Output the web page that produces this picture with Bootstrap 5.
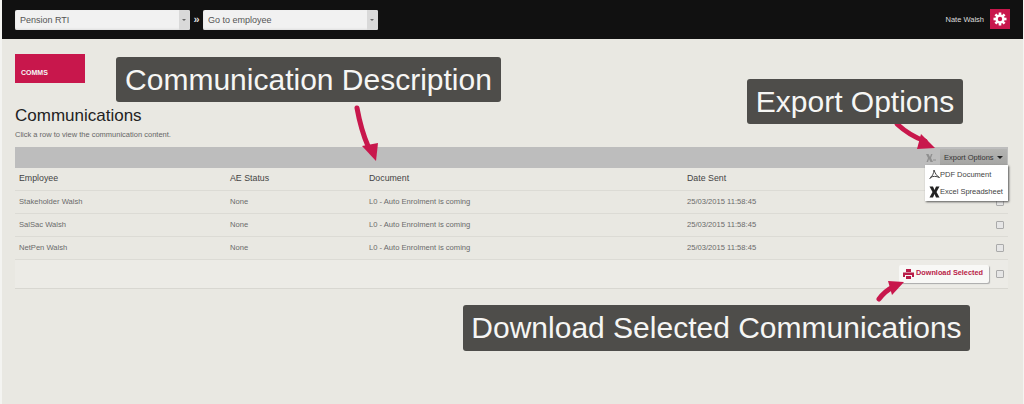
<!DOCTYPE html>
<html lang="en">
<head>
<meta charset="utf-8">
<title>Communications</title>
<link href="https://cdn.jsdelivr.net/npm/bootstrap@5.3.0/dist/css/bootstrap.min.css" rel="stylesheet">
<style>
html,body{height:404px;overflow:hidden}
body{background:#e9e8e2;font-family:"Liberation Sans",Arial,sans-serif;position:relative;color:#444;border-left:2px solid #f4f4f1;border-right:1px solid #f4f4f1}
.topbar{height:39px;background:#111;margin-left:-2px;margin-right:-1px;padding:10px 14px 0 15px}
.fake-select{height:20px;background:#f1f1f1;border-radius:2px;font-size:9px;color:#555;line-height:20px;padding-left:5px;position:relative;box-shadow:inset 0 -1px 2px #ddd}
.fake-select::after{content:"";position:absolute;right:0;top:0;bottom:0;width:11px;background:#d9d9d9;border-radius:0 2px 2px 0}
.fake-select::before{content:"";position:absolute;right:4px;top:9px;border:2px solid transparent;border-top:2px solid #666;z-index:1}
.sel-a{width:175px}.sel-b{width:175px}
.sep{color:#ddd;font-size:11px;font-weight:700;width:13px;text-align:center;line-height:18px}
.username{color:#ddd;font-size:7.5px}
.gear-box{width:20px;height:20px;background:#c8174c;margin-left:6px;margin-top:-1px}
.main-area{padding:15px 15px 0 13px}
.comms{width:70px;background:#c8174c;color:#f5f5f5;font-size:7px;font-weight:700;padding-left:6px;line-height:38px;height:29px;overflow:hidden}
.title{font-size:17px;color:#222;line-height:22px;margin:22px 0 0;font-weight:400}
.hint{font-size:7.5px;color:#666;line-height:10px;margin:3px 0 0}
.toolbar{height:21px;background:#bdbdbd;margin-top:7px;padding:2px 1px 0 0}
.xicon{margin:4px 4px 0 0}
.export-btn{height:17px;width:67px;background:linear-gradient(#b4b4b2,#a4a4a2);color:#333;font-size:7.5px;line-height:17px;padding-left:4px;position:relative;white-space:nowrap}
.export-btn::after{content:"";position:absolute;right:4px;top:7px;border:3px solid transparent;border-top:3px solid #222}
.grid-table{width:993px;table-layout:fixed;margin:0;font-size:7.6px;--bs-table-bg:transparent;--bs-table-color:#6a6a6a;border-color:#d9d8d2}
.grid-table th,.grid-table td{padding:0 4px;vertical-align:middle;border-bottom:1px solid #dcdbd5}
.grid-table th{font-weight:400;font-size:8.8px;color:#444;height:22px}
.grid-table td{height:23px}
.grid-table tr.foot td{height:29px;background:#ecebe6;border-bottom:1px solid #d8d7d1}
.grid-table .box-cell{padding:0 4px 0 0;text-align:right}
.box{display:inline-block;width:8px;height:8px;border:1px solid #aaa;background:#e6e6e6;border-radius:1px;vertical-align:middle}
.dl-btn{display:inline-flex;align-items:center;gap:2px;height:18px;width:90px;padding:0 0 0 4px;background:#f8f8f6;border:0;box-shadow:1px 1px 1px #aaa;border-radius:2px;color:#b81c48;font-size:7.3px;font-weight:700;white-space:nowrap;vertical-align:middle;margin-right:-1px}
.dl-btn svg{flex:none}
.foot-cell{text-align:right}
.export-menu{position:absolute;left:923px;top:165px;width:83px;height:36px;background:#fff;box-shadow:1px 1px 2px #555;font-size:7.5px;color:#444;padding-top:1px}
.export-menu div{height:17px;display:flex;align-items:center;gap:0;padding-left:4px;white-space:nowrap}
.export-menu svg{flex:none}
.callout{position:absolute;background:#4e4d4a;color:#f6f6f4;border-radius:3px;white-space:nowrap;text-align:center;font-weight:400;font-size:30px}
.c1{left:114px;top:57px;width:385px;height:45px;line-height:45px}
.c2{left:745px;top:79px;width:216px;height:45px;line-height:45px}
.c3{left:461px;top:305px;width:507px;height:46px;line-height:46px}
.arrows{position:absolute;left:-2px;top:0;width:1024px;height:404px;pointer-events:none}
</style>
</head>
<body>
<div class="topbar d-flex align-items-start">
  <div class="fake-select sel-a">Pension RTI</div>
  <div class="sep">»</div>
  <div class="fake-select sel-b">Go to employee</div>
  <div class="ms-auto d-flex align-items-center">
    <span class="username">Nate Walsh</span>
    <div class="gear-box d-flex align-items-center justify-content-center">
      <svg width="14" height="14" viewBox="0 0 14 14"><g fill="#fff"><circle cx="7" cy="7" r="4.6"/><rect x="5.700" y="0.500" width="2.600" height="13"/><rect x="5.700" y="0.500" width="2.600" height="13" transform="rotate(45 7 7)"/><rect x="5.700" y="0.500" width="2.600" height="13" transform="rotate(90 7 7)"/><rect x="5.700" y="0.500" width="2.600" height="13" transform="rotate(135 7 7)"/></g><circle cx="7" cy="7" r="2.200" fill="#c8174c"/></svg>
    </div>
  </div>
</div>
<div class="main-area">
  <div class="comms">COMMS</div>
  <h1 class="title">Communications</h1>
  <p class="hint">Click a row to view the communication content.</p>
  <div class="toolbar d-flex justify-content-end align-items-start">
    <svg class="xicon" width="11" height="10" viewBox="0 0 11 10"><path d="M1 1h2.500L5 4l1-3h1.500L6 5l2 4H5.500L4 6 3 9H1.500L3 5z" fill="#8f8f8f"/><path d="M8 7h3" stroke="#8f8f8f"/></svg>
    <div class="export-btn">Export Options</div>
  </div>
  <table class="table grid-table">
    <colgroup><col style="width:211px"><col style="width:139px"><col style="width:318px"><col style="width:309px"><col style="width:16px"></colgroup>
    <thead><tr><th>Employee</th><th>AE Status</th><th>Document</th><th>Date Sent</th><th></th></tr></thead>
    <tbody>
      <tr><td>Stakeholder Walsh</td><td>None</td><td>L0 - Auto Enrolment is coming</td><td>25/03/2015 11:58:45</td><td class="box-cell"><span class="box"></span></td></tr>
      <tr><td>SalSac Walsh</td><td>None</td><td>L0 - Auto Enrolment is coming</td><td>25/03/2015 11:58:45</td><td class="box-cell"><span class="box"></span></td></tr>
      <tr><td>NetPen Walsh</td><td>None</td><td>L0 - Auto Enrolment is coming</td><td>25/03/2015 11:58:45</td><td class="box-cell"><span class="box"></span></td></tr>
      <tr class="foot"><td colspan="4" class="foot-cell"><button class="dl-btn" type="button"><svg width="11" height="10" viewBox="0 0 11 10"><path d="M3 0h5v3H3zM0 3.500h11V8H9V6H2v2H0zM3 7h5v3H3z" fill="#b81c48"/></svg>Download Selected</button></td><td class="box-cell"><span class="box"></span></td></tr>
    </tbody>
  </table>
</div>
<div class="export-menu">
  <div><svg width="11" height="11" viewBox="0 0 11 11"><path d="M5 1c1 3 2.500 6 5.500 7.500M5 1C5 4 3 8 .5 10M1 8.500c3-1.500 6-1.500 9.500 0" fill="none" stroke="#444"/></svg>PDF Document</div>
  <div><svg width="11" height="12" viewBox="0 0 11 12"><path d="M.5 .5H4L5.500 4 7 .5h3.500L7.500 6l3 5.500H7L5.500 8 4 11.500H.5l3-5.500z" fill="#222"/></svg>Excel Spreadsheet</div>
</div>
<svg class="arrows" viewBox="0 0 1024 404">
  <g fill="none" stroke="#c8174c" stroke-width="5" stroke-linecap="round">
    <path d="M357 108 Q361 130 368 146"/>
    <path d="M897 124 Q910 136 925 141"/>
    <path d="M879 299 Q885 291 893 287"/>
  </g>
  <g fill="#c8174c">
    <path d="M362 146 L378 143 L376 161z"/>
    <path d="M921 134 L935 148 L917 149z"/>
    <path d="M888 281 L904 282 L892 295z"/>
  </g>
</svg>
<div class="callout c1">Communication Description</div>
<div class="callout c2">Export Options</div>
<div class="callout c3">Download Selected Communications</div>
</body>
</html>
